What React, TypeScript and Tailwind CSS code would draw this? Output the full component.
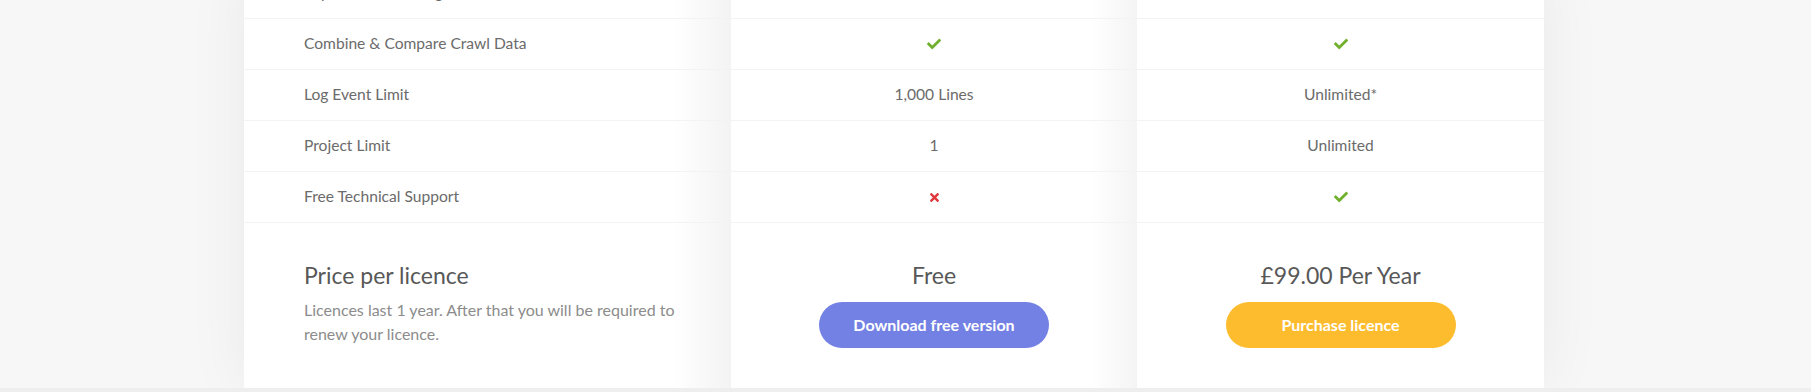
import { FaCheck, FaTimes } from 'react-icons/fa';

type Cell = string | 'yes' | 'no';

const rows: { label: string; free: Cell; paid: Cell }[] = [
    { label: 'Improve Crawl Budget', free: 'yes', paid: 'yes' },
    { label: 'Combine & Compare Crawl Data', free: 'yes', paid: 'yes' },
    { label: 'Log Event Limit', free: '1,000 Lines', paid: 'Unlimited*' },
    { label: 'Project Limit', free: '1', paid: 'Unlimited' },
    { label: 'Free Technical Support', free: 'no', paid: 'yes' },
];

function Value({ v }: { v: Cell }) {
    if (v === 'yes') return <FaCheck className="text-[#71b02d]" size={14} />;
    if (v === 'no') return <FaTimes className="text-[#e0383d]" size={13} />;
    return <span>{v}</span>;
}

export default function App() {
    return (
        <div className="min-h-screen bg-[#f7f7f7] font-['Lato',sans-serif] overflow-hidden">
            <div className="ml-[244px] -mt-[32px] w-[1300px] flex bg-white shadow-[0_0_60px_rgba(0,0,0,0.06)]">
                {/* feature names */}
                <div className="w-[487px] flex flex-col bg-[linear-gradient(to_right,#fff_calc(100%-58px),#f3f3f3)]">
                    {rows.map((r) => (
                        <div key={r.label} className="h-[51px] flex items-center pl-[60px] border-b border-[#f3f3f3] text-[15.6px] text-[#6b6b6b]">
                            {r.label}
                        </div>
                    ))}
                    <div className="h-[165px] pl-[60px] pt-[38px]">
                        <h3 className="text-[23px] leading-[28px] text-[#585858]">Price per licence</h3>
                        <p className="mt-[9px] max-w-[372px] text-[16px] leading-[24px] text-[#8c8c8c]">
                            Licences last 1 year. After that you will be required to renew your licence.
                        </p>
                    </div>
                </div>

                {/* free */}
                <div className="w-[406px] flex flex-col bg-[linear-gradient(to_right,#fff_calc(100%-46px),#f4f4f4)]">
                    {rows.map((r) => (
                        <div key={r.label} className="h-[51px] flex items-center justify-center border-b border-[#f3f3f3] text-[15.6px] text-[#6b6b6b]">
                            <Value v={r.free} />
                        </div>
                    ))}
                    <div className="h-[165px] pt-[38px] flex flex-col items-center">
                        <div className="text-[23px] leading-[28px] text-[#585858]">Free</div>
                        <button className="mt-[13px] w-[230px] h-[46px] rounded-full bg-[#7381e4] text-white text-[16px] font-bold">
                            Download free version
                        </button>
                    </div>
                </div>

                {/* paid */}
                <div className="w-[407px] flex flex-col">
                    {rows.map((r) => (
                        <div key={r.label} className="h-[51px] flex items-center justify-center border-b border-[#f3f3f3] text-[15.6px] text-[#6b6b6b]">
                            <Value v={r.paid} />
                        </div>
                    ))}
                    <div className="h-[165px] pt-[38px] flex flex-col items-center">
                        <div className="text-[23px] leading-[28px] text-[#585858]">£99.00 Per Year</div>
                        <button className="mt-[13px] w-[230px] h-[46px] rounded-full bg-[#fdbc2d] text-white text-[16px] font-bold">
                            Purchase licence
                        </button>
                    </div>
                </div>
            </div>
            <div className="h-[4px] bg-[#eeeeee]" />
        </div>
    );
}
